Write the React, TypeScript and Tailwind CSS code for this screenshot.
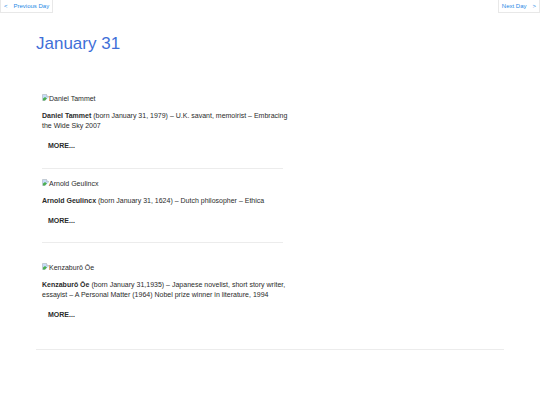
type TPerson = {
	id: number;
	name: string;
	description: string;
	spacing: string;
};

const people: TPerson[] = [
	{
		id: 1,
		name: "Daniel Tammet",
		description:
			"(born January 31, 1979) – U.K. savant, memoirist – Embracing the Wide Sky 2007",
		spacing: "border-b pb-[17px]",
	},
	{
		id: 2,
		name: "Arnold Geulincx",
		description: "(born January 31, 1624) – Dutch philosopher – Ethica",
		spacing: "border-b pt-2.5 pb-4",
	},
	{
		id: 3,
		name: "Kenzaburō Ōe",
		description:
			"(born January 31,1935) – Japanese novelist, short story writer, essayist – A Personal Matter (1964) Nobel prize winner in literature, 1994",
		spacing: "pt-5 pb-[29px]",
	},
];

const MissingImage = ({ name }: { name: string }) => (
	<div className="flex">
		<svg viewBox="0 0 14 14" className="size-[7px] shrink-0" aria-hidden="true">
			<path d="M1 1h8l4 4v8H1z" fill="#c6dcfa" stroke="#a3a8ae" />
			<path d="M9 1v4h4" fill="#fff" stroke="#a3a8ae" />
			<path d="M2 13v-4l4-3 4 3-4 4z" fill="#4caf50" />
			<path d="M14 6 6 14h8z" fill="#fff" />
		</svg>
		<span>{name}</span>
	</div>
);

const Person = ({ person }: { person: TPerson }) => (
	<article className={`border-[#ececec] ${person.spacing}`}>
		<MissingImage name={person.name} />
		<p className="mt-[7px] -mr-2">
			<strong className="font-bold">{person.name}</strong> {person.description}
		</p>
		<a href="#more" className="mt-2.5 ml-1.5 block w-fit font-bold">
			MORE...
		</a>
	</article>
);

const App = () => {
	return (
		<div className="min-h-screen bg-white font-['Liberation_Sans',Arial,sans-serif] text-[7px] leading-[10px] text-[#2b2b2b]">
			<nav className="flex justify-between text-[6px] text-[#1e88e5]">
				<a
					href="#previous"
					className="flex gap-1.5 border border-t-0 border-[#e8e8e8] px-[3px] pt-px pb-px"
				>
					<span>&lt;</span>
					<span>Previous Day</span>
				</a>
				<a
					href="#next"
					className="flex gap-1.5 border border-t-0 border-[#e8e8e8] px-[3px] pt-px pb-px"
				>
					<span>Next Day</span>
					<span>&gt;</span>
				</a>
			</nav>
			<main className="mx-9 border-b border-[#ececec] pt-[21px]">
				<h1 className="text-[17px] leading-5 text-[#3f6fd8]">January 31</h1>
				<section className="mt-10 w-[54%] px-1.5">
					{people.map((person) => (
						<Person key={person.id} person={person} />
					))}
				</section>
			</main>
		</div>
	);
};

export default App;
